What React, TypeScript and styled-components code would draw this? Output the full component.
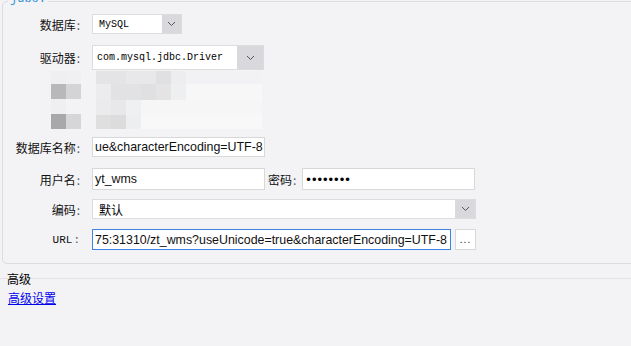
import React from "react";
import styled, { createGlobalStyle } from "styled-components";

const Global = createGlobalStyle`
  html, body { margin: 0; padding: 0; }
  body {
    background: #f3f3f6;
    overflow: hidden;
    font-family: "Noto Sans CJK SC", "Liberation Sans", sans-serif;
    font-size: 12px;
    color: #111;
  }
`;

const Page = styled.div`
  width: 631px;
  height: 346px;
  overflow: hidden;
  padding-top: 1px;
  box-sizing: border-box;
`;

const Panel = styled.div`
  position: relative;
  margin-left: 2px;
  width: 650px;
  height: 263px;
  box-sizing: border-box;
  border: 1px solid #dcdce0;
  border-radius: 5px;
  padding: 12px 0 0 0;
`;

const Legend = styled.span`
  position: absolute;
  top: -9px;
  left: 5px;
  padding: 0 2px;
  font-family: "Liberation Mono", monospace;
  font-size: 12px;
  line-height: 13px;
  color: #3a94d6;
  background: #f3f3f6;
`;

const Form = styled.div`
  display: flex;
  flex-direction: column;
`;

const Row = styled.div<{ $h: number; $mt: number }>`
  display: flex;
  align-items: center;
  height: ${(p) => p.$h}px;
  margin-top: ${(p) => p.$mt}px;
`;

const Label = styled.div<{ $mono?: boolean }>`
  width: 77px;
  margin-right: 12px;
  text-align: right;
  white-space: nowrap;
  font-family: ${(p) =>
    p.$mono ? `"Liberation Mono", monospace` : `"Noto Sans CJK SC", sans-serif`};
  font-size: ${(p) => (p.$mono ? 11 : 12)}px;
  color: #111;
`;

const Colon = styled.span`
  color: #555;
  margin-left: 1px;
`;

const InlineLabel = styled.div`
  margin: 0 6px 0 3px;
  white-space: nowrap;
  font-size: 12px;
  color: #111;
`;

const Select = styled.div<{ $w: number }>`
  display: flex;
  width: ${(p) => p.$w}px;
  height: 100%;
  box-sizing: border-box;
  border: 1px solid #dcdcdc;
  background: #fff;
`;

const SelectValue = styled.div<{ $mono?: boolean; $pad: number }>`
  flex: 1;
  display: flex;
  align-items: center;
  padding-left: ${(p) => p.$pad}px;
  white-space: nowrap;
  overflow: hidden;
  font-family: ${(p) =>
    p.$mono ? `"Liberation Mono", monospace` : `"Noto Sans CJK SC", sans-serif`};
  font-size: ${(p) => (p.$mono ? 10 : 12)}px;
  color: #000;
`;

const Chevron = styled.div<{ $w: number }>`
  width: ${(p) => p.$w}px;
  display: flex;
  align-items: center;
  justify-content: center;
  background: #d9d9dd;
`;

const Input = styled.div<{ $w: number; $focus?: boolean }>`
  display: flex;
  align-items: center;
  width: ${(p) => p.$w}px;
  height: 100%;
  box-sizing: border-box;
  border: 1px solid ${(p) => (p.$focus ? "#3c83e6" : "#d8d8d8")};
  background: #fff;
  padding-left: 2px;
  overflow: hidden;
  white-space: nowrap;
  font-family: "Liberation Sans", sans-serif;
  font-size: 12.4px;
  color: #111;
`;

const Dots = styled.span`
  font-family: "Liberation Sans", sans-serif;
  font-size: 13px;
  letter-spacing: 1px;
  padding-left: 1px;
  color: #000;
`;

const MoreButton = styled.div`
  width: 21px;
  height: 100%;
  margin-left: 4px;
  box-sizing: border-box;
  border: 1px solid #d8d8d8;
  background: #fff;
  display: flex;
  align-items: flex-end;
  justify-content: center;
  padding-bottom: 4px;
  font-family: "Liberation Sans", sans-serif;
  font-size: 10px;
  letter-spacing: 1px;
  color: #222;
`;

const MosaicArea = styled.div`
  display: flex;
  height: 58px;
  margin-top: 1px;
`;

const MosaicGroup = styled.div<{ $w: number; $ml: number }>`
  display: flex;
  flex-direction: column;
  width: ${(p) => p.$w}px;
  margin-left: ${(p) => p.$ml}px;
`;

const MosaicRow = styled.div<{ $h: number }>`
  display: flex;
  height: ${(p) => p.$h}px;
`;

const Cell = styled.div<{ $c: string; $grow?: boolean }>`
  width: 15px;
  flex: ${(p) => (p.$grow ? "1" : "none")};
  background: ${(p) => p.$c};
`;

const SectionTitle = styled.div`
  position: relative;
  margin-top: 8px;
  height: 14px;
  line-height: 14px;
  padding-left: 7px;
  font-size: 12px;
  color: #000;
  &::before {
    content: "";
    position: absolute;
    left: 0;
    right: 0;
    top: 6px;
    height: 1px;
    background: #e2e2e6;
  }
  span {
    position: relative;
  }
`;

const LinkText = styled.a`
  display: inline-block;
  margin: 5px 0 0 8px;
  font-size: 12px;
  line-height: 14px;
  color: #0000ee;
  text-decoration: underline;
  cursor: pointer;
`;

const ChevronIcon = () => (
  <svg width="9" height="6" viewBox="0 0 9 6">
    <path d="M1 1 L4.5 4.5 L8 1" fill="none" stroke="#555" strokeWidth="1" />
  </svg>
);

const leftMosaic: { h: number; cells: string[] }[] = [
  { h: 13, cells: ["#efeff1", "#f0f0f2"] },
  { h: 15, cells: ["#b8b8ba", "#d4d4d6"] },
  { h: 15, cells: ["#efeff1", "#f3f3f5"] },
  { h: 15, cells: ["#a8a8aa", "#d6d6d8"] },
];

const rightMosaic: { h: number; cells: string[]; tail: string }[] = [
  { h: 13, cells: ["#e4e4e6", "#e4e4e6", "#e8e8ea", "#e8e8ea", "#e0e0e2", "#ededef"], tail: "#f2f2f4" },
  { h: 16, cells: ["#ececee", "#e2e2e4", "#e2e2e4", "#e0e0e2", "#e5e3e3", "#eeeff1"], tail: "#f7f7f8" },
  { h: 15, cells: ["#ebebed", "#e8e8ea", "#eef0f2"], tail: "#f6f6f7" },
  { h: 14, cells: ["#e0dfe0", "#dddcdd", "#eceef0"], tail: "#f8f8f9" },
];

export default function App() {
  return (
    <>
      <Global />
      <Page>
        <Panel>
          <Legend>jdbc:</Legend>
          <Form>
            <Row $h={20} $mt={0}>
              <Label>
                数据库<Colon>:</Colon>
              </Label>
              <Select $w={90}>
                <SelectValue $mono $pad={6}>MySQL</SelectValue>
                <Chevron $w={19}>
                  <ChevronIcon />
                </Chevron>
              </Select>
            </Row>
            <Row $h={25} $mt={11}>
              <Label>
                驱动器<Colon>:</Colon>
              </Label>
              <Select $w={172}>
                <SelectValue $mono $pad={4}>com.mysql.jdbc.Driver</SelectValue>
                <Chevron $w={26}>
                  <ChevronIcon />
                </Chevron>
              </Select>
            </Row>
            <MosaicArea>
              <MosaicGroup $w={30} $ml={48}>
                {leftMosaic.map((r, i) => (
                  <MosaicRow key={i} $h={r.h}>
                    {r.cells.map((c, j) => (
                      <Cell key={j} $c={c} />
                    ))}
                  </MosaicRow>
                ))}
              </MosaicGroup>
              <MosaicGroup $w={166} $ml={15}>
                {rightMosaic.map((r, i) => (
                  <MosaicRow key={i} $h={r.h}>
                    {r.cells.map((c, j) => (
                      <Cell key={j} $c={c} />
                    ))}
                    <Cell $c={r.tail} $grow />
                  </MosaicRow>
                ))}
              </MosaicGroup>
            </MosaicArea>
            <Row $h={20} $mt={8}>
              <Label>
                数据库名称<Colon>:</Colon>
              </Label>
              <Input $w={173}>ue&amp;characterEncoding=UTF-8</Input>
            </Row>
            <Row $h={22} $mt={11}>
              <Label>
                用户名<Colon>:</Colon>
              </Label>
              <Input $w={173}>yt_wms</Input>
              <InlineLabel>
                密码<Colon>:</Colon>
              </InlineLabel>
              <Input $w={173}>
                <Dots>••••••••</Dots>
              </Input>
            </Row>
            <Row $h={20} $mt={9}>
              <Label>
                编码<Colon>:</Colon>
              </Label>
              <Select $w={384}>
                <SelectValue $pad={6}>默认</SelectValue>
                <Chevron $w={20}>
                  <ChevronIcon />
                </Chevron>
              </Select>
            </Row>
            <Row $h={21} $mt={10}>
              <Label $mono>
                URL<Colon>:</Colon>
              </Label>
              <Input $w={359} $focus>
                75:31310/zt_wms?useUnicode=true&amp;characterEncoding=UTF-8
              </Input>
              <MoreButton>...</MoreButton>
            </Row>
          </Form>
        </Panel>
        <SectionTitle>
          <span>高级</span>
        </SectionTitle>
        <LinkText>高级设置</LinkText>
      </Page>
    </>
  );
}
